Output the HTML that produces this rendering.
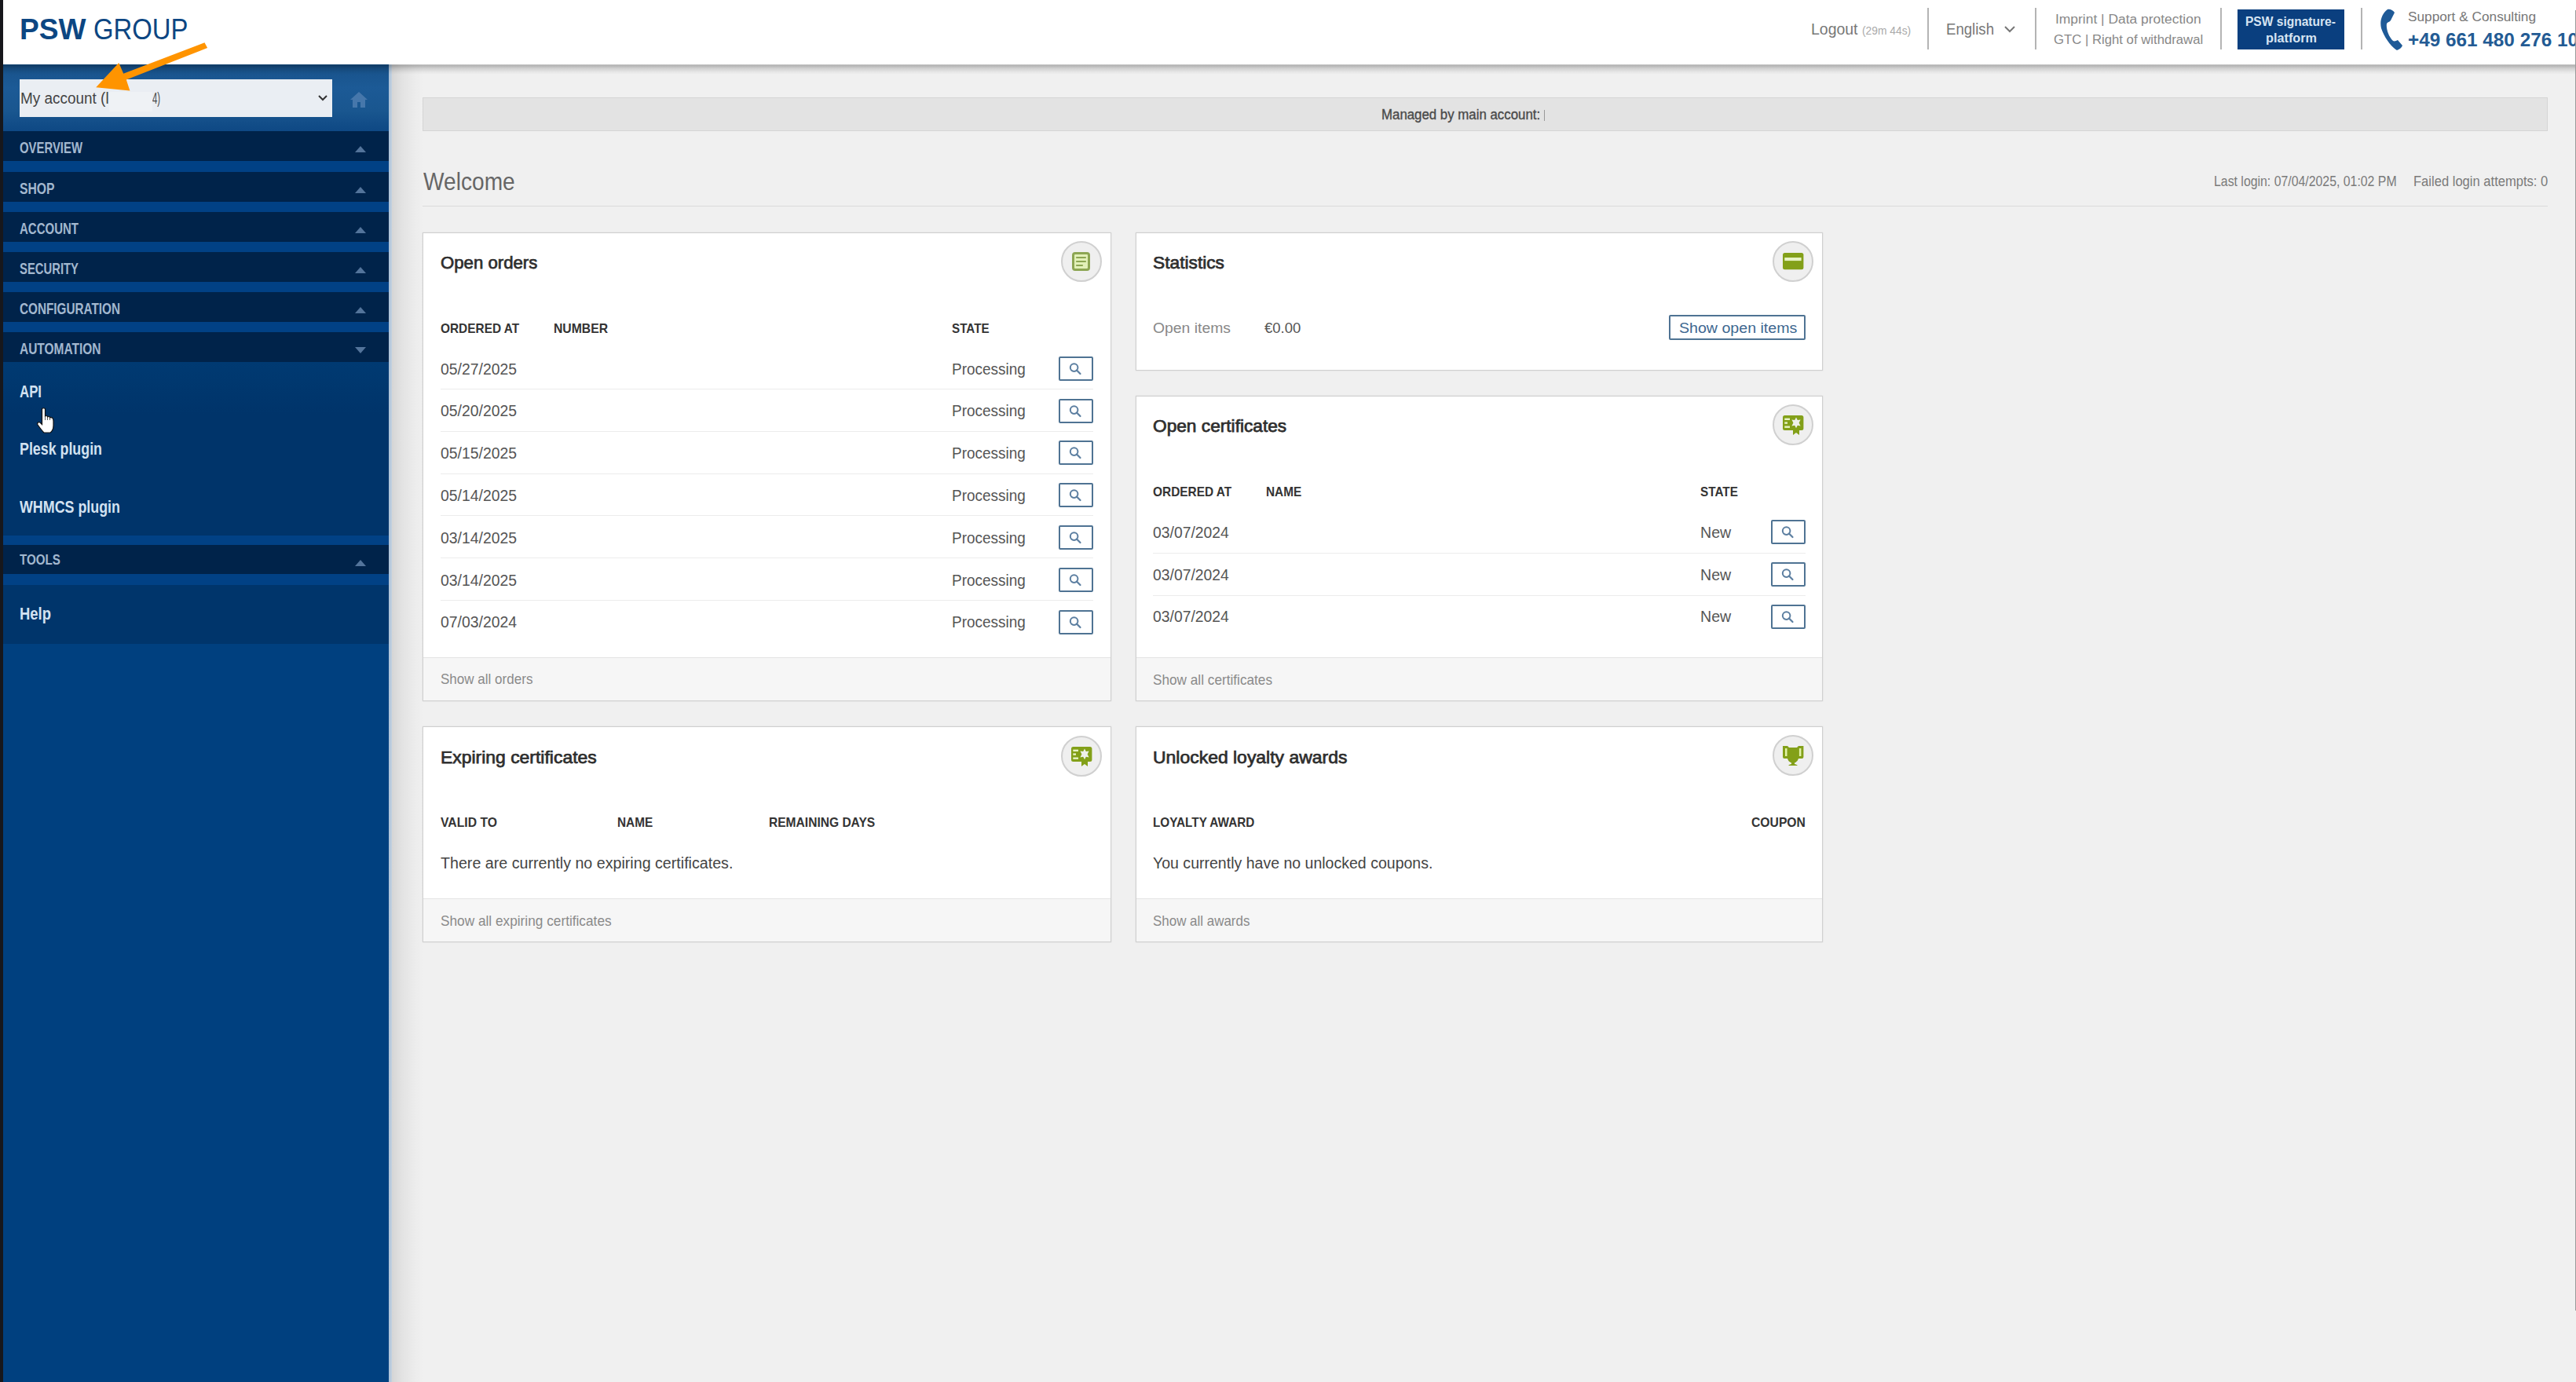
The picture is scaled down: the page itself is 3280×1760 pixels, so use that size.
<!DOCTYPE html>
<html><head><meta charset="utf-8">
<style>
html,body{margin:0;padding:0;}
body{width:3280px;height:1760px;overflow:hidden;position:relative;background:#f0f0f0;font-family:"Liberation Sans",sans-serif;}
.a{position:absolute;box-sizing:border-box;}
.t{position:absolute;font-family:"Liberation Sans",sans-serif;white-space:pre;transform-origin:0 0;z-index:20;}
.sep{position:absolute;width:2px;top:10px;height:53px;background:#b4b4b4;}
.band{position:absolute;left:4px;width:491px;height:38px;background:#00234a;}
.tri{position:absolute;left:452px;width:0;height:0;border-left:7.5px solid transparent;border-right:7.5px solid transparent;}
.card{position:absolute;background:#fff;border:1px solid #d0d0d0;box-shadow:0 0 1.5px rgba(0,0,0,.12);box-sizing:border-box;}
.foot{position:absolute;left:0;right:0;bottom:0;background:#f6f6f6;border-top:1px solid #e4e4e4;}
.circ{position:absolute;width:52px;height:52px;border-radius:50%;background:#efefef;border:2px solid #d0d0d0;box-sizing:border-box;}
.sb{position:absolute;width:44px;height:31px;border:2px solid #4f7393;border-radius:2px;box-sizing:border-box;background:#fff;}
.rl{position:absolute;height:1px;background:#ececec;}
</style></head>
<body>
<!-- header -->
<div class="a" style="left:4px;top:0;width:3276px;height:81.5px;background:#fff;z-index:10;"></div>
<div class="a" style="left:4px;top:81.5px;width:3276px;height:13px;background:linear-gradient(180deg,rgba(0,0,0,.16) 0,rgba(0,0,0,.25) 12%,rgba(0,0,0,.13) 40%,rgba(0,0,0,.04) 75%,rgba(0,0,0,0) 100%);z-index:10;"></div>
<div class="sep" style="left:2454px;z-index:11"></div>
<div class="sep" style="left:2591px;z-index:11"></div>
<div class="sep" style="left:2827px;z-index:11"></div>
<div class="sep" style="left:3006px;z-index:11"></div>
<svg class="a" style="left:2550px;top:30px;z-index:11" width="18" height="14" viewBox="0 0 18 14"><polyline points="3,4 9,10 15,4" fill="none" stroke="#777" stroke-width="2"/></svg>
<div class="a" style="left:2849px;top:12px;width:136px;height:51px;background:#0a3f7f;z-index:11"></div>
<svg class="a" style="left:3028px;top:10px;z-index:11" width="32" height="56" viewBox="0 0 32 56">
<path d="M12 2 C15 1 19 3 21 6 L16 16 C15 18 12 18 11 20 C10 26 13 36 19 42 C21 43 23 42 25 41 L31 48 C30 51 27 53 24 54 C17 50 8 38 4 26 C2 18 4 8 12 2 Z" fill="#1f5a97"/>
</svg>

<!-- left black bar -->
<div class="a" style="left:0;top:0;width:4px;height:1760px;background:#17171b;z-index:30"></div>

<!-- sidebar -->
<div class="a" style="left:4px;top:82px;width:491px;height:1678px;background:#00407f;z-index:5"></div>
<div class="a" style="left:495px;top:82px;width:4px;height:1678px;background:linear-gradient(90deg,#a9c0d8,#c4d2e0);z-index:5"></div>
<div class="a" style="left:499px;top:82px;width:40px;height:1678px;background:linear-gradient(90deg,rgba(0,0,0,.115),rgba(0,0,0,.06) 30%,rgba(0,0,0,.02) 70%,rgba(0,0,0,0));z-index:1"></div>
<div class="a" style="left:4px;top:82px;width:491px;height:85px;background:linear-gradient(180deg,#175189 0%,#1c5a96 35%,#19568f 70%,#0e4884 100%);z-index:6"></div>
<div class="a" style="left:25px;top:101.3px;width:398px;height:47.5px;background:#eaeef3;z-index:7"></div>
<div class="a" style="left:139px;top:117px;width:55px;height:25px;background:#eff2f5;z-index:7"></div>
<svg class="a" style="left:404px;top:120px;z-index:8" width="14" height="10" viewBox="0 0 14 10"><polyline points="2,2 7,7 12,2" fill="none" stroke="#333" stroke-width="2"/></svg>
<svg class="a" style="left:445px;top:116px;z-index:8" width="24" height="22" viewBox="0 0 24 22"><path d="M12 1 L23 11 L20 11 L20 21 L14 21 L14 14 L10 14 L10 21 L4 21 L4 11 L1 11 Z" fill="#4677ab"/></svg>

<div class="a" style="left:4px;top:205px;width:491px;height:14px;background:#014185;z-index:6"></div>
<div class="a" style="left:4px;top:257px;width:491px;height:13px;background:#014185;z-index:6"></div>
<div class="a" style="left:4px;top:308px;width:491px;height:13px;background:#014185;z-index:6"></div>
<div class="a" style="left:4px;top:359px;width:491px;height:13px;background:#014185;z-index:6"></div>
<div class="a" style="left:4px;top:410px;width:491px;height:13px;background:#014185;z-index:6"></div>
<div class="a" style="left:4px;top:682px;width:491px;height:12px;background:#014185;z-index:6"></div>
<div class="a" style="left:4px;top:731px;width:491px;height:14px;background:#014185;z-index:6"></div>
<div class="band" style="top:167px;z-index:6"></div>
<div class="band" style="top:219px;z-index:6"></div>
<div class="band" style="top:270px;z-index:6"></div>
<div class="band" style="top:321px;z-index:6"></div>
<div class="band" style="top:372px;z-index:6"></div>
<div class="band" style="top:423px;z-index:6"></div>
<div class="a" style="left:4px;top:461px;width:491px;height:221px;background:linear-gradient(180deg,#003a72 0%,#00346a 30%,#00346a 100%);z-index:6"></div>
<div class="band" style="top:694px;height:37px;z-index:6"></div>
<div class="a" style="left:4px;top:745px;width:491px;height:75px;background:#00356b;z-index:6"></div>
<div class="tri" style="top:186px;border-bottom:8px solid #53749b;z-index:8"></div>
<div class="tri" style="top:238px;border-bottom:8px solid #53749b;z-index:8"></div>
<div class="tri" style="top:289px;border-bottom:8px solid #53749b;z-index:8"></div>
<div class="tri" style="top:340px;border-bottom:8px solid #53749b;z-index:8"></div>
<div class="tri" style="top:391px;border-bottom:8px solid #53749b;z-index:8"></div>
<div class="tri" style="top:442px;border-top:8px solid #53749b;z-index:8"></div>
<div class="tri" style="top:713px;border-bottom:8px solid #53749b;z-index:8"></div>

<!-- main -->
<div class="a" style="left:538px;top:124px;width:2706px;height:43px;background:#e3e3e3;border:1px solid #d5d5d5;z-index:2"></div>
<div class="a" style="left:1966px;top:140px;width:1px;height:14px;background:#999;z-index:3"></div>
<div class="a" style="left:538px;top:262px;width:2706px;height:1px;background:#dadada;z-index:2"></div>

<!-- cards -->
<div class="card" style="left:538px;top:295.5px;width:876.5px;height:597px;"><div class="foot" style="height:53.5px"></div></div>
<div class="card" style="left:1446px;top:295.5px;width:874.5px;height:176px;"></div>
<div class="card" style="left:1446px;top:503.5px;width:874.5px;height:389px;"><div class="foot" style="height:53.5px"></div></div>
<div class="card" style="left:538px;top:925px;width:876.5px;height:275px;"><div class="foot" style="height:53.8px"></div></div>
<div class="card" style="left:1446px;top:925px;width:874.5px;height:275px;"><div class="foot" style="height:53.8px"></div></div>

<!-- icons -->
<div class="circ" style="left:1351px;top:307px;z-index:3"></div>
<svg class="a" style="left:1363px;top:319px;z-index:4" width="28" height="28" viewBox="0 0 28 28">
<rect x="3.5" y="3.5" width="20" height="21" rx="2.5" fill="#e2f0b8" stroke="#8da653" stroke-width="3"/>
<line x1="8" y1="9" x2="19" y2="9" stroke="#8da653" stroke-width="2.2" stroke-linecap="round"/>
<line x1="8" y1="14" x2="19" y2="14" stroke="#8da653" stroke-width="2.2" stroke-linecap="round"/>
<line x1="8" y1="19" x2="15" y2="19" stroke="#8da653" stroke-width="2.2" stroke-linecap="round"/>
</svg>
<div class="circ" style="left:2257px;top:307px;z-index:3"></div>
<svg class="a" style="left:2268px;top:320px;z-index:4" width="30" height="26" viewBox="0 0 30 26">
<rect x="2" y="2" width="26.4" height="21.3" rx="2.5" fill="#83a019"/>
<rect x="4.3" y="8" width="21.3" height="4.1" fill="#e6f3c4"/>
</svg>
<div class="circ" style="left:2257px;top:515px;z-index:3"></div>
<svg class="a" style="left:2268px;top:527px;z-index:4" width="30" height="30" viewBox="0 0 30 30">
<path d="M4.5 2 H25.9 Q28.4 2 28.4 4.5 V18.5 Q28.4 21 25.9 21 H23 V27 L19 24 L15 27 V21 H4.5 Q2 21 2 18.5 V4.5 Q2 2 4.5 2 Z" fill="#83a019"/>
<rect x="4.3" y="5.6" width="6.7" height="2.4" fill="#e6f3c4"/>
<rect x="4.3" y="10.4" width="3.7" height="2.4" fill="#e6f3c4"/>
<rect x="4.3" y="15.5" width="6.7" height="2.4" fill="#e6f3c4"/>
<polygon points="19,4.5 20.8,8 24.6,7.4 22.6,11.4 24.6,15.4 20.8,14.8 19,18.3 17.2,14.8 13.4,15.4 15.4,11.4 13.4,7.4 17.2,8" fill="#eef0ea"/>
</svg>
<div class="circ" style="left:1351px;top:937px;z-index:3"></div>
<svg class="a" style="left:1362px;top:949px;z-index:4" width="30" height="30" viewBox="0 0 30 30">
<path d="M4.5 2 H25.9 Q28.4 2 28.4 4.5 V18.5 Q28.4 21 25.9 21 H23 V27 L19 24 L15 27 V21 H4.5 Q2 21 2 18.5 V4.5 Q2 2 4.5 2 Z" fill="#83a019"/>
<rect x="4.3" y="5.6" width="6.7" height="2.4" fill="#e6f3c4"/>
<rect x="4.3" y="10.4" width="3.7" height="2.4" fill="#e6f3c4"/>
<rect x="4.3" y="15.5" width="6.7" height="2.4" fill="#e6f3c4"/>
<polygon points="19,4.5 20.8,8 24.6,7.4 22.6,11.4 24.6,15.4 20.8,14.8 19,18.3 17.2,14.8 13.4,15.4 15.4,11.4 13.4,7.4 17.2,8" fill="#eef0ea"/>
</svg>
<div class="circ" style="left:2257px;top:936px;z-index:3"></div>
<svg class="a" style="left:2268px;top:947px;z-index:4" width="30" height="30" viewBox="0 0 30 30">
<path d="M2 3 H8 L10 5 H20 L22 3 H28.4 V17 Q28.4 19 26.4 19 H22 Q21 23 17 24.5 V26 Q20 26.5 21 28 H9 Q10 26.5 13 26 V24.5 Q9 23 8 19 H4 Q2 19 2 17 Z" fill="#83a019"/>
<rect x="5" y="6" width="2.5" height="10" fill="#e2f3a8"/>
<rect x="22.9" y="6" width="2.5" height="10" fill="#e2f3a8"/>
</svg>

<!-- row dividers & search buttons -->
<div id="rows"></div>
<div class="sb" style="left:1347.6px;top:453.8px;z-index:3"></div>
<svg class="a" style="left:1359.6px;top:458.8px;z-index:4" width="20" height="20" viewBox="0 0 20 20"><circle cx="7.6" cy="9.1" r="4.8" fill="none" stroke="#5b7ea0" stroke-width="2"/><line x1="11" y1="12.5" x2="15.5" y2="17" stroke="#5b7ea0" stroke-width="2.2" stroke-linecap="round"/></svg>
<div class="rl" style="left:561px;top:495.0px;width:831px;z-index:3"></div>
<div class="sb" style="left:1347.6px;top:507.6px;z-index:3"></div>
<svg class="a" style="left:1359.6px;top:512.6px;z-index:4" width="20" height="20" viewBox="0 0 20 20"><circle cx="7.6" cy="9.1" r="4.8" fill="none" stroke="#5b7ea0" stroke-width="2"/><line x1="11" y1="12.5" x2="15.5" y2="17" stroke="#5b7ea0" stroke-width="2.2" stroke-linecap="round"/></svg>
<div class="rl" style="left:561px;top:548.8px;width:831px;z-index:3"></div>
<div class="sb" style="left:1347.6px;top:561.4px;z-index:3"></div>
<svg class="a" style="left:1359.6px;top:566.4px;z-index:4" width="20" height="20" viewBox="0 0 20 20"><circle cx="7.6" cy="9.1" r="4.8" fill="none" stroke="#5b7ea0" stroke-width="2"/><line x1="11" y1="12.5" x2="15.5" y2="17" stroke="#5b7ea0" stroke-width="2.2" stroke-linecap="round"/></svg>
<div class="rl" style="left:561px;top:602.6px;width:831px;z-index:3"></div>
<div class="sb" style="left:1347.6px;top:615.2px;z-index:3"></div>
<svg class="a" style="left:1359.6px;top:620.2px;z-index:4" width="20" height="20" viewBox="0 0 20 20"><circle cx="7.6" cy="9.1" r="4.8" fill="none" stroke="#5b7ea0" stroke-width="2"/><line x1="11" y1="12.5" x2="15.5" y2="17" stroke="#5b7ea0" stroke-width="2.2" stroke-linecap="round"/></svg>
<div class="rl" style="left:561px;top:656.4px;width:831px;z-index:3"></div>
<div class="sb" style="left:1347.6px;top:669.0px;z-index:3"></div>
<svg class="a" style="left:1359.6px;top:674.0px;z-index:4" width="20" height="20" viewBox="0 0 20 20"><circle cx="7.6" cy="9.1" r="4.8" fill="none" stroke="#5b7ea0" stroke-width="2"/><line x1="11" y1="12.5" x2="15.5" y2="17" stroke="#5b7ea0" stroke-width="2.2" stroke-linecap="round"/></svg>
<div class="rl" style="left:561px;top:710.2px;width:831px;z-index:3"></div>
<div class="sb" style="left:1347.6px;top:722.8px;z-index:3"></div>
<svg class="a" style="left:1359.6px;top:727.8px;z-index:4" width="20" height="20" viewBox="0 0 20 20"><circle cx="7.6" cy="9.1" r="4.8" fill="none" stroke="#5b7ea0" stroke-width="2"/><line x1="11" y1="12.5" x2="15.5" y2="17" stroke="#5b7ea0" stroke-width="2.2" stroke-linecap="round"/></svg>
<div class="rl" style="left:561px;top:764.0px;width:831px;z-index:3"></div>
<div class="sb" style="left:1347.6px;top:776.6px;z-index:3"></div>
<svg class="a" style="left:1359.6px;top:781.6px;z-index:4" width="20" height="20" viewBox="0 0 20 20"><circle cx="7.6" cy="9.1" r="4.8" fill="none" stroke="#5b7ea0" stroke-width="2"/><line x1="11" y1="12.5" x2="15.5" y2="17" stroke="#5b7ea0" stroke-width="2.2" stroke-linecap="round"/></svg>
<div class="sb" style="left:2254.5px;top:661.9px;z-index:3"></div>
<svg class="a" style="left:2266.5px;top:666.9px;z-index:4" width="20" height="20" viewBox="0 0 20 20"><circle cx="7.6" cy="9.1" r="4.8" fill="none" stroke="#5b7ea0" stroke-width="2"/><line x1="11" y1="12.5" x2="15.5" y2="17" stroke="#5b7ea0" stroke-width="2.2" stroke-linecap="round"/></svg>
<div class="rl" style="left:1468px;top:703.7px;width:831px;z-index:3"></div>
<div class="sb" style="left:2254.5px;top:715.7px;z-index:3"></div>
<svg class="a" style="left:2266.5px;top:720.7px;z-index:4" width="20" height="20" viewBox="0 0 20 20"><circle cx="7.6" cy="9.1" r="4.8" fill="none" stroke="#5b7ea0" stroke-width="2"/><line x1="11" y1="12.5" x2="15.5" y2="17" stroke="#5b7ea0" stroke-width="2.2" stroke-linecap="round"/></svg>
<div class="rl" style="left:1468px;top:757.5px;width:831px;z-index:3"></div>
<div class="sb" style="left:2254.5px;top:769.5px;z-index:3"></div>
<svg class="a" style="left:2266.5px;top:774.5px;z-index:4" width="20" height="20" viewBox="0 0 20 20"><circle cx="7.6" cy="9.1" r="4.8" fill="none" stroke="#5b7ea0" stroke-width="2"/><line x1="11" y1="12.5" x2="15.5" y2="17" stroke="#5b7ea0" stroke-width="2.2" stroke-linecap="round"/></svg>

<!-- show open items button -->
<div class="a" style="left:2125px;top:401px;width:174px;height:32px;border:2px solid #4f7393;border-radius:2px;z-index:3"></div>

<!-- overlays -->
<svg class="a" style="left:0;top:0;z-index:40" width="300" height="130" viewBox="0 0 300 130">
<polygon points="122.2,111.3 151.3,80 157.2,93.8 260.5,54.2 264.1,61.1 160.8,101.4 165.4,115.6" fill="#ff9400"/>
</svg>
<svg class="a" style="left:44px;top:518px;z-index:40" width="30" height="36" viewBox="0 0 30 36">
<path d="M9.5 2.5 Q11.5 1 13.5 2.5 V12 Q15 11 16.5 12 V13 Q18 12 19.5 13 V14 Q21 13 23 14.5 Q24 16 24 18 V24 Q24 30 20 33 H12 Q9 30 4 23 Q3 21 4.5 20 Q6 19 8 21 L9.5 22.5 Z" fill="#fff" stroke="#111" stroke-width="1.2"/>
<line x1="13.5" y1="12" x2="13.5" y2="17" stroke="#333" stroke-width="0.8"/>
<line x1="16.5" y1="13" x2="16.5" y2="17" stroke="#333" stroke-width="0.8"/>
<line x1="19.5" y1="14" x2="19.5" y2="17" stroke="#333" stroke-width="0.8"/>
</svg>

<div class="a" style="left:3279px;top:13px;width:1px;height:1656px;background:#9a9a9a;z-index:35"></div>
<div class='t' style='left:24.5px;top:18.7px;font-size:37.10px;line-height:37.10px;font-weight:700;color:#0c4682;transform:scaleX(1.0004);'>PSW</div>
<div class='t' style='left:118.5px;top:18.7px;font-size:37.10px;line-height:37.10px;font-weight:400;color:#0c4682;transform:scaleX(0.8862);'>GROUP</div>
<div class='t' style='left:2305.6px;top:27.1px;font-size:20.29px;line-height:20.29px;font-weight:400;color:#777;transform:scaleX(0.9590);'>Logout</div>
<div class='t' style='left:2370.8px;top:32.6px;font-size:13.77px;line-height:13.77px;font-weight:400;color:#aaa;transform:scaleX(1.0037);'>(29m 44s)</div>
<div class='t' style='left:2478.0px;top:27.1px;font-size:20.29px;line-height:20.29px;font-weight:400;color:#777;transform:scaleX(0.9169);'>English</div>
<div class='t' style='left:2617.0px;top:16.9px;font-size:15.80px;line-height:15.80px;font-weight:400;color:#888;transform:scaleX(1.1028);'>Imprint | Data protection</div>
<div class='t' style='left:2614.8px;top:43.3px;font-size:15.80px;line-height:15.80px;font-weight:400;color:#888;transform:scaleX(1.0585);'>GTC | Right of withdrawal</div>
<div class='t' style='left:2859.3px;top:19.8px;font-size:15.94px;line-height:15.94px;font-weight:700;color:#d6e4f2;transform:scaleX(0.9755);'>PSW signature-</div>
<div class='t' style='left:2885.0px;top:40.7px;font-size:15.94px;line-height:15.94px;font-weight:700;color:#d6e4f2;transform:scaleX(1.0196);'>platform</div>
<div class='t' style='left:3066.0px;top:13.8px;font-size:15.94px;line-height:15.94px;font-weight:400;color:#777;transform:scaleX(1.0822);'>Support &amp; Consulting</div>
<div class='t' style='left:3066.0px;top:39.1px;font-size:24.64px;line-height:24.64px;font-weight:700;color:#235b94;transform:scaleX(0.9873);'>+49 661 480 276 10</div>
<div class='t' style='left:26.4px;top:115.9px;font-size:19.57px;line-height:19.57px;font-weight:400;color:#444;transform:scaleX(0.9680);'>My account (l</div>
<div class='t' style='left:194.0px;top:115.9px;font-size:19.57px;line-height:19.57px;font-weight:400;color:#444;transform:scaleX(0.5803);'>4)</div>
<div class='t' style='left:25.0px;top:178.9px;font-size:19.57px;line-height:19.57px;font-weight:700;color:#a3b8cf;transform:scaleX(0.7612);'>OVERVIEW</div>
<div class='t' style='left:25.0px;top:230.9px;font-size:19.57px;line-height:19.57px;font-weight:700;color:#a3b8cf;transform:scaleX(0.8025);'>SHOP</div>
<div class='t' style='left:25.0px;top:281.9px;font-size:19.57px;line-height:19.57px;font-weight:700;color:#a3b8cf;transform:scaleX(0.7668);'>ACCOUNT</div>
<div class='t' style='left:25.0px;top:332.9px;font-size:19.57px;line-height:19.57px;font-weight:700;color:#a3b8cf;transform:scaleX(0.7582);'>SECURITY</div>
<div class='t' style='left:25.0px;top:383.9px;font-size:19.57px;line-height:19.57px;font-weight:700;color:#a3b8cf;transform:scaleX(0.7818);'>CONFIGURATION</div>
<div class='t' style='left:25.0px;top:434.9px;font-size:19.57px;line-height:19.57px;font-weight:700;color:#a3b8cf;transform:scaleX(0.7914);'>AUTOMATION</div>
<div class='t' style='left:25.0px;top:704.2px;font-size:18.84px;line-height:18.84px;font-weight:700;color:#a3b8cf;transform:scaleX(0.8060);'>TOOLS</div>
<div class='t' style='left:25.0px;top:487.8px;font-size:21.74px;line-height:21.74px;font-weight:700;color:#d3e2f1;transform:scaleX(0.7727);'>API</div>
<div class='t' style='left:25.0px;top:560.5px;font-size:21.74px;line-height:21.74px;font-weight:700;color:#d3e2f1;transform:scaleX(0.8201);'>Plesk plugin</div>
<div class='t' style='left:25.0px;top:634.5px;font-size:21.74px;line-height:21.74px;font-weight:700;color:#d3e2f1;transform:scaleX(0.8219);'>WHMCS plugin</div>
<div class='t' style='left:25.0px;top:771.2px;font-size:21.74px;line-height:21.74px;font-weight:700;color:#d3e2f1;transform:scaleX(0.8491);'>Help</div>
<div class='t' style='left:1759.2px;top:137.6px;font-size:17.68px;line-height:17.68px;font-weight:400;color:#4a4a4a;transform:scaleX(0.9524);-webkit-text-stroke:0.35px #4a4a4a;'>Managed by main account:</div>
<div class='t' style='left:539.0px;top:216.7px;font-size:30.72px;line-height:30.72px;font-weight:400;color:#666;transform:scaleX(0.9155);'>Welcome</div>
<div class='t' style='left:2818.7px;top:222.8px;font-size:17.54px;line-height:17.54px;font-weight:400;color:#7a7a7a;transform:scaleX(0.9040);'>Last login: 07/04/2025, 01:02 PM</div>
<div class='t' style='left:3072.7px;top:222.8px;font-size:17.54px;line-height:17.54px;font-weight:400;color:#7a7a7a;transform:scaleX(0.9450);'>Failed login attempts: 0</div>
<div class='t' style='left:561.2px;top:322.8px;font-size:22.90px;line-height:22.90px;font-weight:400;color:#2e2e2e;transform:scaleX(0.9690);-webkit-text-stroke:0.75px #2e2e2e;'>Open orders</div>
<div class='t' style='left:561.0px;top:409.5px;font-size:16.23px;line-height:16.23px;font-weight:700;color:#333;transform:scaleX(0.9505);'>ORDERED AT</div>
<div class='t' style='left:704.7px;top:409.5px;font-size:16.23px;line-height:16.23px;font-weight:700;color:#333;transform:scaleX(0.9707);'>NUMBER</div>
<div class='t' style='left:1212.0px;top:409.5px;font-size:16.23px;line-height:16.23px;font-weight:700;color:#333;transform:scaleX(0.9376);'>STATE</div>
<div class='t' style='left:561.0px;top:459.6px;font-size:20.58px;line-height:20.58px;font-weight:400;color:#555;transform:scaleX(0.9417);'>05/27/2025</div>
<div class='t' style='left:1212.3px;top:459.6px;font-size:20.58px;line-height:20.58px;font-weight:400;color:#555;transform:scaleX(0.9205);'>Processing</div>
<div class='t' style='left:561.0px;top:513.4px;font-size:20.58px;line-height:20.58px;font-weight:400;color:#555;transform:scaleX(0.9417);'>05/20/2025</div>
<div class='t' style='left:1212.3px;top:513.4px;font-size:20.58px;line-height:20.58px;font-weight:400;color:#555;transform:scaleX(0.9205);'>Processing</div>
<div class='t' style='left:561.0px;top:567.2px;font-size:20.58px;line-height:20.58px;font-weight:400;color:#555;transform:scaleX(0.9417);'>05/15/2025</div>
<div class='t' style='left:1212.3px;top:567.2px;font-size:20.58px;line-height:20.58px;font-weight:400;color:#555;transform:scaleX(0.9205);'>Processing</div>
<div class='t' style='left:561.0px;top:621.0px;font-size:20.58px;line-height:20.58px;font-weight:400;color:#555;transform:scaleX(0.9417);'>05/14/2025</div>
<div class='t' style='left:1212.3px;top:621.0px;font-size:20.58px;line-height:20.58px;font-weight:400;color:#555;transform:scaleX(0.9205);'>Processing</div>
<div class='t' style='left:561.0px;top:674.8px;font-size:20.58px;line-height:20.58px;font-weight:400;color:#555;transform:scaleX(0.9417);'>03/14/2025</div>
<div class='t' style='left:1212.3px;top:674.8px;font-size:20.58px;line-height:20.58px;font-weight:400;color:#555;transform:scaleX(0.9205);'>Processing</div>
<div class='t' style='left:561.0px;top:728.6px;font-size:20.58px;line-height:20.58px;font-weight:400;color:#555;transform:scaleX(0.9417);'>03/14/2025</div>
<div class='t' style='left:1212.3px;top:728.6px;font-size:20.58px;line-height:20.58px;font-weight:400;color:#555;transform:scaleX(0.9205);'>Processing</div>
<div class='t' style='left:561.0px;top:782.4px;font-size:20.58px;line-height:20.58px;font-weight:400;color:#555;transform:scaleX(0.9417);'>07/03/2024</div>
<div class='t' style='left:1212.3px;top:782.4px;font-size:20.58px;line-height:20.58px;font-weight:400;color:#555;transform:scaleX(0.9205);'>Processing</div>
<div class='t' style='left:561.2px;top:856.3px;font-size:18.84px;line-height:18.84px;font-weight:400;color:#8a8a8a;transform:scaleX(0.9047);'>Show all orders</div>
<div class='t' style='left:1468.4px;top:322.8px;font-size:22.90px;line-height:22.90px;font-weight:400;color:#2e2e2e;transform:scaleX(0.9935);-webkit-text-stroke:0.75px #2e2e2e;'>Statistics</div>
<div class='t' style='left:1468.4px;top:408.4px;font-size:19.28px;line-height:19.28px;font-weight:400;color:#888;transform:scaleX(1.0049);'>Open items</div>
<div class='t' style='left:1610.0px;top:408.4px;font-size:19.28px;line-height:19.28px;font-weight:400;color:#555;transform:scaleX(0.9623);'>€0.00</div>
<div class='t' style='left:2137.5px;top:408.4px;font-size:19.28px;line-height:19.28px;font-weight:400;color:#3d6790;transform:scaleX(1.0169);'>Show open items</div>
<div class='t' style='left:1468.4px;top:531.2px;font-size:22.90px;line-height:22.90px;font-weight:400;color:#2e2e2e;transform:scaleX(0.9909);-webkit-text-stroke:0.75px #2e2e2e;'>Open certificates</div>
<div class='t' style='left:1468.4px;top:618.2px;font-size:16.23px;line-height:16.23px;font-weight:700;color:#333;transform:scaleX(0.9514);'>ORDERED AT</div>
<div class='t' style='left:1611.7px;top:618.2px;font-size:16.23px;line-height:16.23px;font-weight:700;color:#333;transform:scaleX(0.9484);'>NAME</div>
<div class='t' style='left:2164.8px;top:618.2px;font-size:16.23px;line-height:16.23px;font-weight:700;color:#333;transform:scaleX(0.9436);'>STATE</div>
<div class='t' style='left:1468.4px;top:667.7px;font-size:20.58px;line-height:20.58px;font-weight:400;color:#555;transform:scaleX(0.9398);'>03/07/2024</div>
<div class='t' style='left:2164.8px;top:667.7px;font-size:20.58px;line-height:20.58px;font-weight:400;color:#555;transform:scaleX(0.9521);'>New</div>
<div class='t' style='left:1468.4px;top:721.5px;font-size:20.58px;line-height:20.58px;font-weight:400;color:#555;transform:scaleX(0.9398);'>03/07/2024</div>
<div class='t' style='left:2164.8px;top:721.5px;font-size:20.58px;line-height:20.58px;font-weight:400;color:#555;transform:scaleX(0.9521);'>New</div>
<div class='t' style='left:1468.4px;top:775.3px;font-size:20.58px;line-height:20.58px;font-weight:400;color:#555;transform:scaleX(0.9398);'>03/07/2024</div>
<div class='t' style='left:2164.8px;top:775.3px;font-size:20.58px;line-height:20.58px;font-weight:400;color:#555;transform:scaleX(0.9521);'>New</div>
<div class='t' style='left:1468.4px;top:857.0px;font-size:18.84px;line-height:18.84px;font-weight:400;color:#8a8a8a;transform:scaleX(0.9135);'>Show all certificates</div>
<div class='t' style='left:561.2px;top:952.7px;font-size:22.90px;line-height:22.90px;font-weight:400;color:#2e2e2e;transform:scaleX(1.0012);-webkit-text-stroke:0.75px #2e2e2e;'>Expiring certificates</div>
<div class='t' style='left:561.0px;top:1038.8px;font-size:16.23px;line-height:16.23px;font-weight:700;color:#333;transform:scaleX(0.9705);'>VALID TO</div>
<div class='t' style='left:786.0px;top:1038.8px;font-size:16.23px;line-height:16.23px;font-weight:700;color:#333;transform:scaleX(0.9463);'>NAME</div>
<div class='t' style='left:979.0px;top:1038.8px;font-size:16.23px;line-height:16.23px;font-weight:700;color:#333;transform:scaleX(0.9596);'>REMAINING DAYS</div>
<div class='t' style='left:561.2px;top:1088.9px;font-size:20.58px;line-height:20.58px;font-weight:400;color:#444;transform:scaleX(0.9548);'>There are currently no expiring certificates.</div>
<div class='t' style='left:561.2px;top:1163.7px;font-size:18.84px;line-height:18.84px;font-weight:400;color:#8a8a8a;transform:scaleX(0.9160);'>Show all expiring certificates</div>
<div class='t' style='left:1468.4px;top:952.7px;font-size:22.90px;line-height:22.90px;font-weight:400;color:#2e2e2e;transform:scaleX(1.0023);-webkit-text-stroke:0.75px #2e2e2e;'>Unlocked loyalty awards</div>
<div class='t' style='left:1468.4px;top:1038.8px;font-size:16.23px;line-height:16.23px;font-weight:700;color:#333;transform:scaleX(0.9440);'>LOYALTY AWARD</div>
<div class='t' style='left:2230.1px;top:1038.8px;font-size:16.23px;line-height:16.23px;font-weight:700;color:#333;transform:scaleX(0.9679);'>COUPON</div>
<div class='t' style='left:1468.4px;top:1088.9px;font-size:20.58px;line-height:20.58px;font-weight:400;color:#444;transform:scaleX(0.9488);'>You currently have no unlocked coupons.</div>
<div class='t' style='left:1468.4px;top:1163.7px;font-size:18.84px;line-height:18.84px;font-weight:400;color:#8a8a8a;transform:scaleX(0.9001);'>Show all awards</div>
</body></html>
